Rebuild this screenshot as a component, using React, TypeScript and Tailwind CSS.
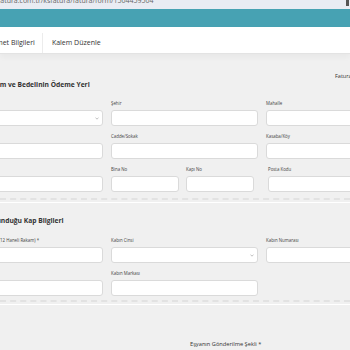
import React from "react";

const Label = ({ children }: { children?: React.ReactNode }) => (
  <div className="h-[8px] leading-[8px] text-[4.4px] text-[#444] whitespace-nowrap overflow-visible">{children}</div>
);

const Input = ({ select }: { select?: boolean }) => (
  <div className="mt-[3px] h-[16px] bg-white border border-[#dadada] rounded-[3px] flex items-center justify-end pr-[3px]">
    {select && (
      <svg width="4" height="3" viewBox="0 0 4 3" className="block">
        <path d="M0.5 0.6 L2 2.2 L3.5 0.6" fill="none" stroke="#999" strokeWidth="0.6" />
      </svg>
    )}
  </div>
);

const Field = ({ label, select }: { label?: string; select?: boolean }) => (
  <div>
    <Label>{label}</Label>
    <Input select={select} />
  </div>
);

const Separator = () => (
  <div>
    <div className="h-[2px] border-t-[2px] border-dashed border-[#e2e2e2]" />
    <div className="mt-[2px] h-[1px] bg-white" />
  </div>
);

export default function App() {
  return (
    <div className="w-[350px] h-[350px] overflow-hidden bg-[#f0f0f0] font-['Open_Sans',sans-serif]">
      <div className="h-[9px] bg-[#e9ecf3] overflow-hidden flex justify-between">
        <div className="text-[7px] leading-[7px] -mt-[3px] -ml-[6px] text-[#666] whitespace-nowrap">
          efatura.com.tr/ksfatura/fatura/form/1504459504
        </div>
        <div className="w-[3px] h-[6px] bg-[#555] mr-[1px]" />
      </div>
      <div className="h-[18px] bg-[#47a2b3]" />
      <div className="h-[27px] bg-white border-b border-[#e3e3e3] flex items-end shadow-[0_3px_6px_rgba(0,0,0,0.04)]">
        <div className="h-[20px] pr-[7px] border-r border-[#ececec] flex items-center text-[7px] text-[#333] whitespace-nowrap">
          <span className="-ml-[14px]">Hizmet Bilgileri</span>
        </div>
        <div className="h-[20px] pl-[9px] flex items-center text-[7px] text-[#333] whitespace-nowrap">
          Kalem Düzenle
        </div>
      </div>

      <div className="pt-[18px]">
        <div className="h-[8px] leading-[8px] ml-[335px] text-[5.5px] text-[#333] whitespace-nowrap">Fatura Bilgileri</div>
        <div className="h-[10px] leading-[10px] -ml-[27px] text-[6.7px] font-bold text-[#333] whitespace-nowrap">
          Gönderim ve Bedelinin Ödeme Yeri
        </div>
        <div className="mt-[9px] -ml-[44px] grid grid-cols-[147px_147px_147px] gap-x-[8px] gap-y-[6px]">
          <Field label="Ülke" select />
          <Field label="Şehir" />
          <Field label="Mahalle" />
          <Field label="İlçe" />
          <Field label="Cadde/Sokak" />
          <Field label="Kasaba/Köy" />
          <Field label="Bina" />
          <div className="grid grid-cols-[68px_68px] gap-x-[7px]">
            <Field label="Bina No" />
            <Field label="Kapı No" />
          </div>
          <div className="pl-[2px]">
            <Field label="Posta Kodu" />
          </div>
        </div>

        <div className="mt-[6px]">
          <Separator />
        </div>

        <div className="mt-[13px] h-[10px] leading-[10px] -ml-[42px] text-[6.7px] font-bold text-[#333] whitespace-nowrap">
          Eşyanın Bulunduğu Kap Bilgileri
        </div>
        <div className="mt-[10px] -ml-[44px] grid grid-cols-[147px_147px_147px] gap-x-[8px] gap-y-[6px]">
          <Field label="Kabın Seri Numarası (12 Haneli Rakam) *" />
          <Field label="Kabın Cinsi" select />
          <Field label="Kabın Numarası" />
          <Field label="" />
          <Field label="Kabın Markası" />
          <div />
        </div>

        <div className="mt-[4px]">
          <Separator />
        </div>

        <div className="mt-[34px] h-[10px] leading-[10px] ml-[190px] text-[5.7px] text-[#333] whitespace-nowrap">
          Eşyanın Gönderilme Şekli *
        </div>
      </div>
    </div>
  );
}
